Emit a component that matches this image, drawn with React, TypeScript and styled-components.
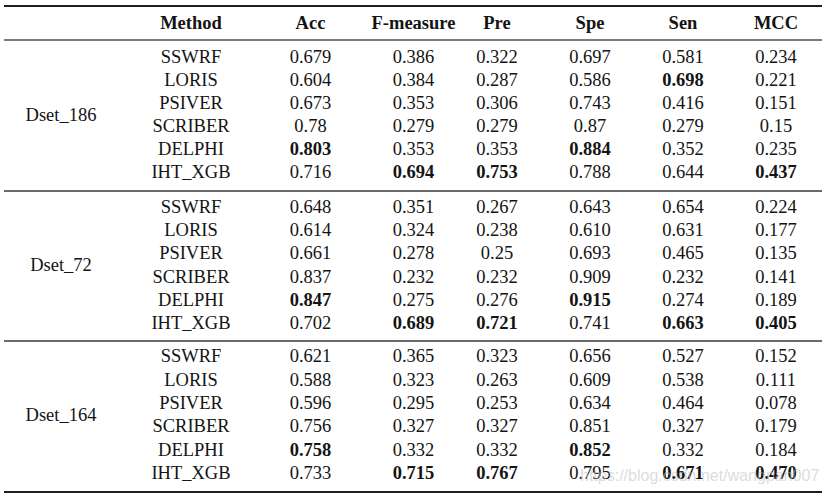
import React from 'react';
import styled, { createGlobalStyle } from 'styled-components';

const GlobalStyle = createGlobalStyle`
  html, body {
    margin: 0;
    padding: 0;
    background: #ffffff;
  }
  body {
    font-family: "Liberation Serif", "Times New Roman", serif;
    color: #141414;
  }
`;

const Page = styled.div`
  position: relative;
  width: 825px;
  height: 499px;
  padding-top: 5px;
  box-sizing: border-box;
  overflow: hidden;
`;

const Table = styled.div`
  margin-left: 4px;
  width: 818px;
  border-top: 2px solid #1e1e1e;
  border-bottom: 2px solid #1e1e1e;
`;

const COLUMNS = '124px 126px 113px 93px 74px 112px 74px 102px';

const HeaderRow = styled.div`
  display: grid;
  grid-template-columns: ${COLUMNS};
  height: 32px;
  align-items: center;
  border-bottom: 2px solid #7c7c7c;
  font-weight: 700;
  font-size: 18.5px;
`;

const Cell = styled.div<{ $bold?: boolean; $shift?: number }>`
  text-align: center;
  font-size: 18.5px;
  line-height: 23px;
  font-weight: ${(p) => (p.$bold ? 700 : 400)};
  padding-left: ${(p) => (p.$shift && p.$shift > 0 ? p.$shift : 0)}px;
  padding-right: ${(p) => (p.$shift && p.$shift < 0 ? -p.$shift : 0)}px;
  white-space: nowrap;
`;

const Group = styled.div<{ $top: number; $bottom: number; $rowH: number; $last?: boolean }>`
  display: grid;
  grid-template-columns: ${COLUMNS};
  grid-auto-rows: ${(p) => p.$rowH}px;
  align-items: center;
  padding-top: ${(p) => p.$top}px;
  padding-bottom: ${(p) => p.$bottom}px;
  border-bottom: ${(p) => (p.$last ? 'none' : '2px solid #6a6a6a')};
`;

const GroupLabel = styled.div<{ $rows: number }>`
  grid-column: 1;
  grid-row: 1 / span ${(p) => p.$rows};
  display: flex;
  align-items: center;
  justify-content: center;
  padding-right: 10px;
  font-size: 18.5px;
`;

const Watermark = styled.div`
  position: absolute;
  left: 580px;
  top: 467px;
  font-family: "Liberation Sans", Arial, sans-serif;
  font-size: 16px;
  color: rgba(190, 190, 190, 0.55);
  white-space: nowrap;
  pointer-events: none;
`;

type Value = [string, boolean?];
type Row = { method: string; values: Value[] };
type Dataset = { name: string; top: number; bottom: number; rowH: number; rows: Row[] };

const headers = ['', 'Method', 'Acc', 'F-measure', 'Pre', 'Spe', 'Sen', 'MCC'];

const datasets: Dataset[] = [
  {
    name: 'Dset_186',
    top: 5,
    bottom: 6,
    rowH: 23,
    rows: [
      { method: 'SSWRF', values: [['0.679'], ['0.386'], ['0.322'], ['0.697'], ['0.581'], ['0.234']] },
      { method: 'LORIS', values: [['0.604'], ['0.384'], ['0.287'], ['0.586'], ['0.698', true], ['0.221']] },
      { method: 'PSIVER', values: [['0.673'], ['0.353'], ['0.306'], ['0.743'], ['0.416'], ['0.151']] },
      { method: 'SCRIBER', values: [['0.78'], ['0.279'], ['0.279'], ['0.87'], ['0.279'], ['0.15']] },
      { method: 'DELPHI', values: [['0.803', true], ['0.353'], ['0.353'], ['0.884', true], ['0.352'], ['0.235']] },
      { method: 'IHT_XGB', values: [['0.716'], ['0.694', true], ['0.753', true], ['0.788'], ['0.644'], ['0.437', true]] },
    ],
  },
  {
    name: 'Dset_72',
    top: 4,
    bottom: 5,
    rowH: 23.2,
    rows: [
      { method: 'SSWRF', values: [['0.648'], ['0.351'], ['0.267'], ['0.643'], ['0.654'], ['0.224']] },
      { method: 'LORIS', values: [['0.614'], ['0.324'], ['0.238'], ['0.610'], ['0.631'], ['0.177']] },
      { method: 'PSIVER', values: [['0.661'], ['0.278'], ['0.25'], ['0.693'], ['0.465'], ['0.135']] },
      { method: 'SCRIBER', values: [['0.837'], ['0.232'], ['0.232'], ['0.909'], ['0.232'], ['0.141']] },
      { method: 'DELPHI', values: [['0.847', true], ['0.275'], ['0.276'], ['0.915', true], ['0.274'], ['0.189']] },
      { method: 'IHT_XGB', values: [['0.702'], ['0.689', true], ['0.721', true], ['0.741'], ['0.663', true], ['0.405', true]] },
    ],
  },
  {
    name: 'Dset_164',
    top: 3,
    bottom: 5.6,
    rowH: 23.4,
    rows: [
      { method: 'SSWRF', values: [['0.621'], ['0.365'], ['0.323'], ['0.656'], ['0.527'], ['0.152']] },
      { method: 'LORIS', values: [['0.588'], ['0.323'], ['0.263'], ['0.609'], ['0.538'], ['0.111']] },
      { method: 'PSIVER', values: [['0.596'], ['0.295'], ['0.253'], ['0.634'], ['0.464'], ['0.078']] },
      { method: 'SCRIBER', values: [['0.756'], ['0.327'], ['0.327'], ['0.851'], ['0.327'], ['0.179']] },
      { method: 'DELPHI', values: [['0.758', true], ['0.332'], ['0.332'], ['0.852', true], ['0.332'], ['0.184']] },
      { method: 'IHT_XGB', values: [['0.733'], ['0.715', true], ['0.767', true], ['0.795'], ['0.671', true], ['0.470', true]] },
    ],
  },
];

export default function App() {
  return (
    <Page>
      <GlobalStyle />
      <Table>
        <HeaderRow>
          {headers.map((h, i) => (
            <Cell key={h || 'blank'} $bold $shift={i === 7 ? 10 : 0}>{h}</Cell>
          ))}
        </HeaderRow>
        {datasets.map((ds, gi) => (
          <Group
            key={ds.name}
            $top={ds.top}
            $bottom={ds.bottom}
            $rowH={ds.rowH}
            $last={gi === datasets.length - 1}
          >
            <GroupLabel $rows={ds.rows.length}>{ds.name}</GroupLabel>
            {ds.rows.map((row) => (
              <React.Fragment key={row.method}>
                <Cell style={{ gridColumn: 2 }}>{row.method}</Cell>
                {row.values.map(([v, bold], vi) => (
                  <Cell key={vi} $bold={bold} $shift={vi === 5 ? 10 : 0}>{v}</Cell>
                ))}
              </React.Fragment>
            ))}
          </Group>
        ))}
      </Table>
      <Watermark>https://blog.csdn.net/wangpan007</Watermark>
    </Page>
  );
}
